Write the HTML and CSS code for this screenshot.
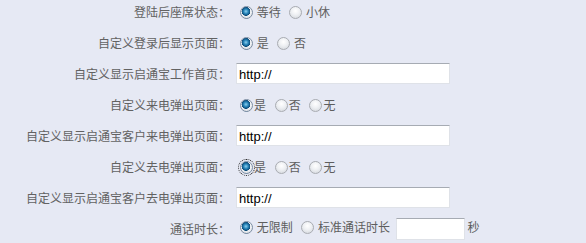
FILE: index.html
```html
<!DOCTYPE html>
<html lang="zh-CN">
<head>
<meta charset="UTF-8" />
<title>座席设置</title>
<link rel="stylesheet" href="styles.css">
</head>
<body>

<table class="shezhi">
  <tr>
    <td class="bt">登陆后座席状态：</td>
    <td class="zhi">
      <label><input type="radio" name="zhuangtai" checked /> 等待</label>
      <label><input type="radio" name="zhuangtai" /> 小休</label>
    </td>
  </tr>
  <tr>
    <td class="bt">自定义登录后显示页面：</td>
    <td class="zhi">
      <label><input type="radio" name="denglu" checked /> 是</label>
      <label><input type="radio" name="denglu" /> 否</label>
    </td>
  </tr>
  <tr>
    <td class="bt">自定义显示启通宝工作首页：</td>
    <td class="zhi"><input type="text" class="wenben" value="http://" /></td>
  </tr>
  <tr>
    <td class="bt">自定义来电弹出页面：</td>
    <td class="zhi">
      <label><input type="radio" name="laidian" checked />是</label>
      <label><input type="radio" name="laidian" />否</label>
      <label><input type="radio" name="laidian" />无</label>
    </td>
  </tr>
  <tr>
    <td class="bt">自定义显示启通宝客户来电弹出页面：</td>
    <td class="zhi"><input type="text" class="wenben" value="http://" /></td>
  </tr>
  <tr>
    <td class="bt">自定义去电弹出页面：</td>
    <td class="zhi">
      <label><input type="radio" name="qudian" class="jiaodian" checked />是</label>
      <label><input type="radio" name="qudian" />否</label>
      <label><input type="radio" name="qudian" />无</label>
    </td>
  </tr>
  <tr>
    <td class="bt">自定义显示启通宝客户去电弹出页面：</td>
    <td class="zhi"><input type="text" class="wenben" value="http://" /></td>
  </tr>
  <tr>
    <td class="bt">通话时长：</td>
    <td class="zhi">
      <label><input type="radio" name="shichang" checked /> 无限制</label>
      <label><input type="radio" name="shichang" /> 标准通话时长</label>
      <input type="text" class="wenben duan" /> 秒
    </td>
  </tr>
</table>

</body>
</html>
```

FILE: styles.css
```css
body { margin: 0; background: #e6e9f4; font-family: "Noto Sans CJK SC", "Noto Sans", sans-serif; font-size: 12px; color: #5e5e5e; }
.shezhi {
  border-collapse: collapse;
  margin-top: -4px;
}
.shezhi td {
  height: 31px;
  padding: 0;
  vertical-align: middle;
  white-space: nowrap;
}
.bt {
  width: 230px;
  text-align: right;
  color: #626262;
}
.zhi {
  padding-left: 6px !important;
}
.zhi label {
  margin-right: 2px;
}
input[type="radio"] {
  -webkit-appearance: none;
  appearance: none;
  width: 13px;
  height: 13px;
  margin: 0 1px 0 4px;
  border-radius: 50%;
  border: 1px solid #a9acb2;
  background: radial-gradient(circle at 50% 35%, #ffffff 0, #eef0f3 45%, #cfd3d9 100%);
  vertical-align: -2px;
  box-sizing: border-box;
}
input[type="radio"]:checked {
  border-color: #7d8ea3;
  background:
    radial-gradient(circle at 45% 40%, #8fd0ee 0, #2a88bc 25%, #0b4a78 47%, transparent 51%),
    radial-gradient(circle at 50% 35%, #ffffff 0, #eef0f3 55%, #cfd3d9 100%);
}
input.jiaodian {
  outline: 1px dotted #222;
  outline-offset: 1px;
}
.wenben {
  width: 214px;
  height: 21px;
  box-sizing: border-box;
  margin: 0;
  padding: 1px 2px 0;
  border: 1px solid #dfe2e8;
  border-top-color: #a6abb3;
  background: #fff;
  font-family: "Liberation Sans", Arial, sans-serif;
  font-size: 13px;
  color: #000;
  vertical-align: middle;
}
.duan {
  width: 69px;
  height: 22px;
  margin-left: 1px;
}
```
